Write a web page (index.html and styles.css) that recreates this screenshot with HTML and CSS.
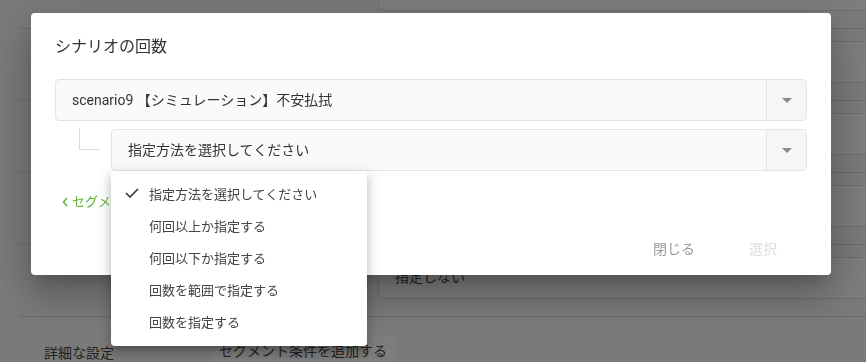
FILE: index.html
```html
<!DOCTYPE html>
<html lang="ja">
<head>
<meta charset="utf-8">
<title>シナリオの回数</title>
<link rel="stylesheet" href="styles.css">
</head>
<body>
<div class="page">
  <div class="rows">
    <div class="row"><div class="field"></div></div>
    <div class="row"><div class="field"></div></div>
    <div class="row"><div class="field"></div></div>
    <div class="row"><div class="field"></div></div>
    <div class="row"><div class="field"><span class="field-text">指定しない</span></div></div>
  </div>
  <div class="advanced">
    <div class="adv-label">詳細な設定</div>
    <div class="adv-btn">セグメント条件を追加する</div>
  </div>
</div>

<div class="overlay"></div>

<div class="dialog">
  <h2 class="dialog-title">シナリオの回数</h2>
  <div class="select">
    <div class="select-text">scenario9 【シミュレーション】不安払拭</div>
    <div class="select-arrow"><span class="tri"></span></div>
  </div>
  <div class="sub-row">
    <div class="connector"></div>
    <div class="select sub-select">
      <div class="select-text">指定方法を選択してください</div>
      <div class="select-arrow"><span class="tri"></span></div>
    </div>
  </div>
  <div class="back-link">
    <svg class="chev" width="6" height="10" viewBox="0 0 6 10"><polyline points="5,1 1.5,5 5,9" fill="none" stroke="currentColor" stroke-width="1.5"/></svg>
    <span>セグメント条件に戻る</span>
  </div>
  <div class="dialog-actions">
    <button class="btn btn-close">閉じる</button>
    <button class="btn btn-select" disabled>選択</button>
  </div>
</div>

<div class="menu">
  <div class="menu-item selected">
    <span class="check"><svg width="14" height="10" viewBox="0 0 14 10"><polyline points="1,5 5,9 13,1" fill="none" stroke="#333" stroke-width="1.6"/></svg></span>
    <span>指定方法を選択してください</span>
  </div>
  <div class="menu-item"><span class="check"></span><span>何回以上か指定する</span></div>
  <div class="menu-item"><span class="check"></span><span>何回以下か指定する</span></div>
  <div class="menu-item"><span class="check"></span><span>回数を範囲で指定する</span></div>
  <div class="menu-item"><span class="check"></span><span>回数を指定する</span></div>
</div>
</body>
</html>
```

FILE: styles.css
```css
* { box-sizing: border-box; }

html, body {
  margin: 0;
  height: 100%;
  overflow: hidden;
}

body {
  background: #f4f4f4;
  font-family: Roboto, "Noto Sans CJK JP", sans-serif;
  color: #333;
}

/* background page */
.page {
  margin-top: -43px;
  padding-left: 19px;
}

.row {
  padding: 12px 0 17px 359px;
  border-bottom: 1px solid #d8d8d8;
}

.field {
  height: 42px;
  width: 620px;
  border: 1px solid #dcdcdc;
  border-radius: 4px;
  background: #fafafa;
  display: flex;
  align-items: center;
  padding: 0 0 4px 16px;
}

.field-text {
  font-size: 14px;
  color: #444;
}

.advanced {
  display: flex;
  align-items: center;
  padding: 20px 0 0 25px;
}

.adv-label {
  width: 167px;
  font-size: 14px;
  color: #444;
}

.adv-btn {
  height: 30px;
  padding: 0 8px;
  background: #fbfbfb;
  font-size: 14px;
  line-height: 28px;
  color: #444;
}

.overlay {
  position: fixed;
  inset: 0;
  background: rgba(0, 0, 0, 0.5);
}

/* dialog */
.dialog {
  position: fixed;
  left: 31px;
  top: 13px;
  width: 800px;
  height: 262px;
  padding: 24px 24px 9px;
  background: #fff;
  border-radius: 4px;
  box-shadow: 0 11px 15px -7px rgba(0,0,0,.2), 0 24px 38px 3px rgba(0,0,0,.14), 0 9px 46px 8px rgba(0,0,0,.12);
}

.dialog-title {
  margin: 0 0 22px;
  font-size: 16px;
  line-height: 20px;
  font-weight: 400;
  color: #333;
}

.select {
  display: flex;
  height: 42px;
  border: 1px solid #e4e4e4;
  border-radius: 4px;
  background: #fafafa;
}

.select-text {
  flex: 1;
  padding-left: 16px;
  font-size: 14px;
  line-height: 40px;
  color: #333;
  white-space: nowrap;
}

.select-arrow {
  width: 40px;
  border-left: 1px solid #e4e4e4;
  background: #f5f6f5;
  border-radius: 0 4px 4px 0;
  display: flex;
  align-items: center;
  justify-content: center;
}

.tri {
  width: 0;
  height: 0;
  border-left: 5px solid transparent;
  border-right: 5px solid transparent;
  border-top: 5px solid #8a8a8a;
}

.sub-row {
  display: flex;
  margin-top: 8px;
}

.connector {
  margin: -1px 11px 0 24px;
  width: 21px;
  height: 22px;
  border-left: 1px solid #dcdcdc;
  border-bottom: 1px solid #dcdcdc;
}

.sub-select {
  flex: 1;
}

.back-link {
  margin-top: 21px;
  padding-left: 7px;
  display: flex;
  align-items: center;
  gap: 4px;
  font-size: 13px;
  line-height: 20px;
  color: #5fb336;
}

.dialog-actions {
  margin-top: 18px;
  padding-right: 14px;
  display: flex;
  justify-content: flex-end;
  gap: 22px;
}

.btn {
  height: 36px;
  padding: 0 16px;
  border: 0;
  background: transparent;
  font-family: inherit;
  font-size: 14px;
}

.btn-close { color: #9a9a9a; }
.btn-select { color: #dddddd; }

/* dropdown menu */
.menu {
  position: absolute;
  left: 111px;
  top: 171px;
  width: 256px;
  padding: 6px 0 9px;
  background: #fff;
  border-radius: 0 0 4px 4px;
  box-shadow: 0 5px 5px -3px rgba(0,0,0,.2), 0 8px 10px 1px rgba(0,0,0,.14), 0 3px 14px 2px rgba(0,0,0,.12);
}

.menu-item {
  display: flex;
  align-items: center;
  height: 32px;
  padding-left: 14px;
  font-size: 13px;
  color: #444;
  white-space: nowrap;
}

.check {
  width: 24px;
  display: flex;
  align-items: center;
}
```
